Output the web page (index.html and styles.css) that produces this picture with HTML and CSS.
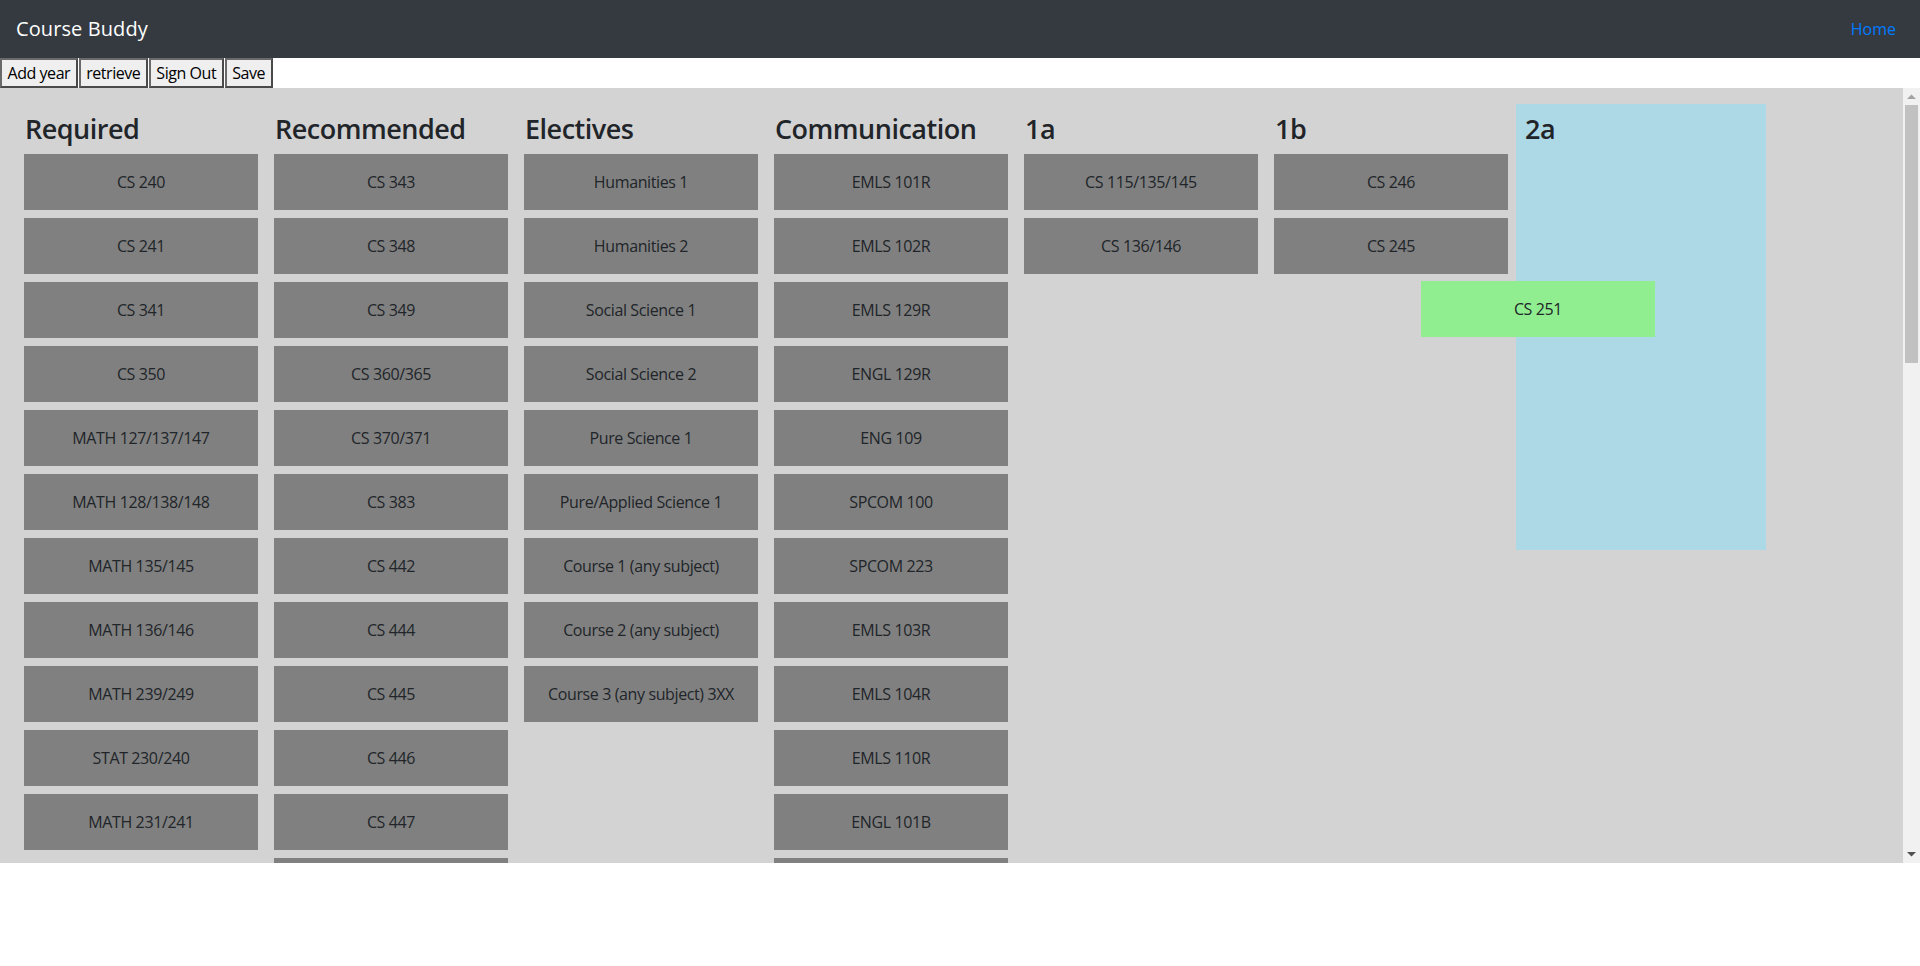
FILE: index.html
```html
<!DOCTYPE html>
<html lang="en">
<head>
<meta charset="utf-8">
<title>Course Buddy</title>
<link rel="stylesheet" href="styles.css">
</head>
<body>
<nav class="navbar">
  <span class="brand">Course Buddy</span>
  <a class="nav-link" href="#">Home</a>
</nav>
<div class="toolbar">
  <button class="tool-btn">Add year</button>
  <button class="tool-btn">retrieve</button>
  <button class="tool-btn">Sign Out</button>
  <button class="tool-btn">Save</button>
</div>
<div class="board-area">
  <div class="board">
    <div class="columns">
      <div class="column">
        <h3 class="col-title">Required</h3>
        <div class="card">CS 240</div>
        <div class="card">CS 241</div>
        <div class="card">CS 341</div>
        <div class="card">CS 350</div>
        <div class="card">MATH 127/137/147</div>
        <div class="card">MATH 128/138/148</div>
        <div class="card">MATH 135/145</div>
        <div class="card">MATH 136/146</div>
        <div class="card">MATH 239/249</div>
        <div class="card">STAT 230/240</div>
        <div class="card">MATH 231/241</div>
      </div>
      <div class="column">
        <h3 class="col-title">Recommended</h3>
        <div class="card">CS 343</div>
        <div class="card">CS 348</div>
        <div class="card">CS 349</div>
        <div class="card">CS 360/365</div>
        <div class="card">CS 370/371</div>
        <div class="card">CS 383</div>
        <div class="card">CS 442</div>
        <div class="card">CS 444</div>
        <div class="card">CS 445</div>
        <div class="card">CS 446</div>
        <div class="card">CS 447</div>
        <div class="card card-clipped"></div>
      </div>
      <div class="column">
        <h3 class="col-title">Electives</h3>
        <div class="card">Humanities 1</div>
        <div class="card">Humanities 2</div>
        <div class="card">Social Science 1</div>
        <div class="card">Social Science 2</div>
        <div class="card">Pure Science 1</div>
        <div class="card">Pure/Applied Science 1</div>
        <div class="card">Course 1 (any subject)</div>
        <div class="card">Course 2 (any subject)</div>
        <div class="card">Course 3 (any subject) 3XX</div>
      </div>
      <div class="column">
        <h3 class="col-title">Communication</h3>
        <div class="card">EMLS 101R</div>
        <div class="card">EMLS 102R</div>
        <div class="card">EMLS 129R</div>
        <div class="card">ENGL 129R</div>
        <div class="card">ENG 109</div>
        <div class="card">SPCOM 100</div>
        <div class="card">SPCOM 223</div>
        <div class="card">EMLS 103R</div>
        <div class="card">EMLS 104R</div>
        <div class="card">EMLS 110R</div>
        <div class="card">ENGL 101B</div>
        <div class="card card-clipped"></div>
      </div>
      <div class="column">
        <h3 class="col-title">1a</h3>
        <div class="card">CS 115/135/145</div>
        <div class="card">CS 136/146</div>
      </div>
      <div class="column">
        <h3 class="col-title">1b</h3>
        <div class="card">CS 246</div>
        <div class="card">CS 245</div>
      </div>
      <div class="column column-active">
        <h3 class="col-title">2a</h3>
      </div>
    </div>
    <div class="card card-dragging">CS 251</div>
  </div>
  <div class="vscroll">
    <div class="vscroll-btn">
      <svg width="9" height="5" viewBox="0 0 9 5"><polygon points="0,5 4.5,0.5 9,5" fill="#a3a3a3"/></svg>
    </div>
    <div class="vscroll-thumb"></div>
    <div class="vscroll-track"></div>
    <div class="vscroll-btn">
      <svg width="9" height="5" viewBox="0 0 9 5"><polygon points="0,0 9,0 4.5,4.5" fill="#505050"/></svg>
    </div>
  </div>
</div>
</body>
</html>
```
FILE: styles.css
```css
html, body {
  margin: 0;
  padding: 0;
}

body {
  font-family: "Open Sans", "Noto Sans", "Liberation Sans", sans-serif;
  font-size: 16px;
  line-height: 1.5;
  color: #212529;
  background: #fff;
}

.navbar {
  height: 58px;
  box-sizing: border-box;
  padding: 0 24px 0 16px;
  background: #343a40;
  display: flex;
  align-items: center;
  justify-content: space-between;
}

.brand {
  color: #fff;
  font-size: 20px;
  line-height: 30px;
  letter-spacing: 0.1px;
}

.nav-link {
  color: #007bff;
  text-decoration: none;
  font-size: 16px;
  line-height: 24px;
}

.toolbar {
  height: 30px;
  display: flex;
  gap: 1px;
  background: #fff;
}

.tool-btn {
  font-family: inherit;
  font-size: 16px;
  line-height: 24px;
  letter-spacing: -0.45px;
  color: #000;
  margin: 0;
  padding: 1px 5.5px;
  background: #efefef;
  border: 2px solid;
  border-color: #6a6a6a #4a4a4a #4a4a4a #6a6a6a;
  border-radius: 0;
  height: 30px;
}

.board-area {
  display: flex;
  height: 775px;
  background: #d3d3d3;
}

.board {
  position: relative;
  flex: 1;
  min-width: 0;
  overflow: hidden;
  box-sizing: border-box;
  padding: 16px;
}

.vscroll {
  width: 17px;
  flex: 0 0 17px;
  background: #f1f1f1;
  display: flex;
  flex-direction: column;
}

.vscroll-btn {
  height: 17px;
  flex: 0 0 17px;
  display: flex;
  align-items: center;
  justify-content: center;
}

.vscroll-thumb {
  height: 258px;
  flex: 0 0 258px;
  margin: 0 2px;
  background: #c1c1c1;
}

.vscroll-track {
  flex: 1;
}

.columns {
  display: flex;
  align-items: flex-start;
}

.column {
  width: 250px;
  flex: 0 0 250px;
  box-sizing: border-box;
  padding: 8px;
  min-height: 446px;
}

.column-active {
  background: #add8e6;
}

.col-title {
  margin: 0 0 8px;
  font-size: 27px;
  font-weight: 600;
  letter-spacing: -0.5px;
  line-height: 33.6px;
  padding-left: 1px;
}

.card {
  height: 56px;
  box-sizing: border-box;
  padding: 16px 0;
  margin-bottom: 8px;
  background: #808080;
  text-align: center;
  line-height: 24px;
  letter-spacing: -0.38px;
  color: #212529;
  white-space: nowrap;
}

.card-dragging {
  position: absolute;
  left: 1421px;
  top: 193px;
  width: 234px;
  margin: 0;
  background: #90ee90;
}
```
